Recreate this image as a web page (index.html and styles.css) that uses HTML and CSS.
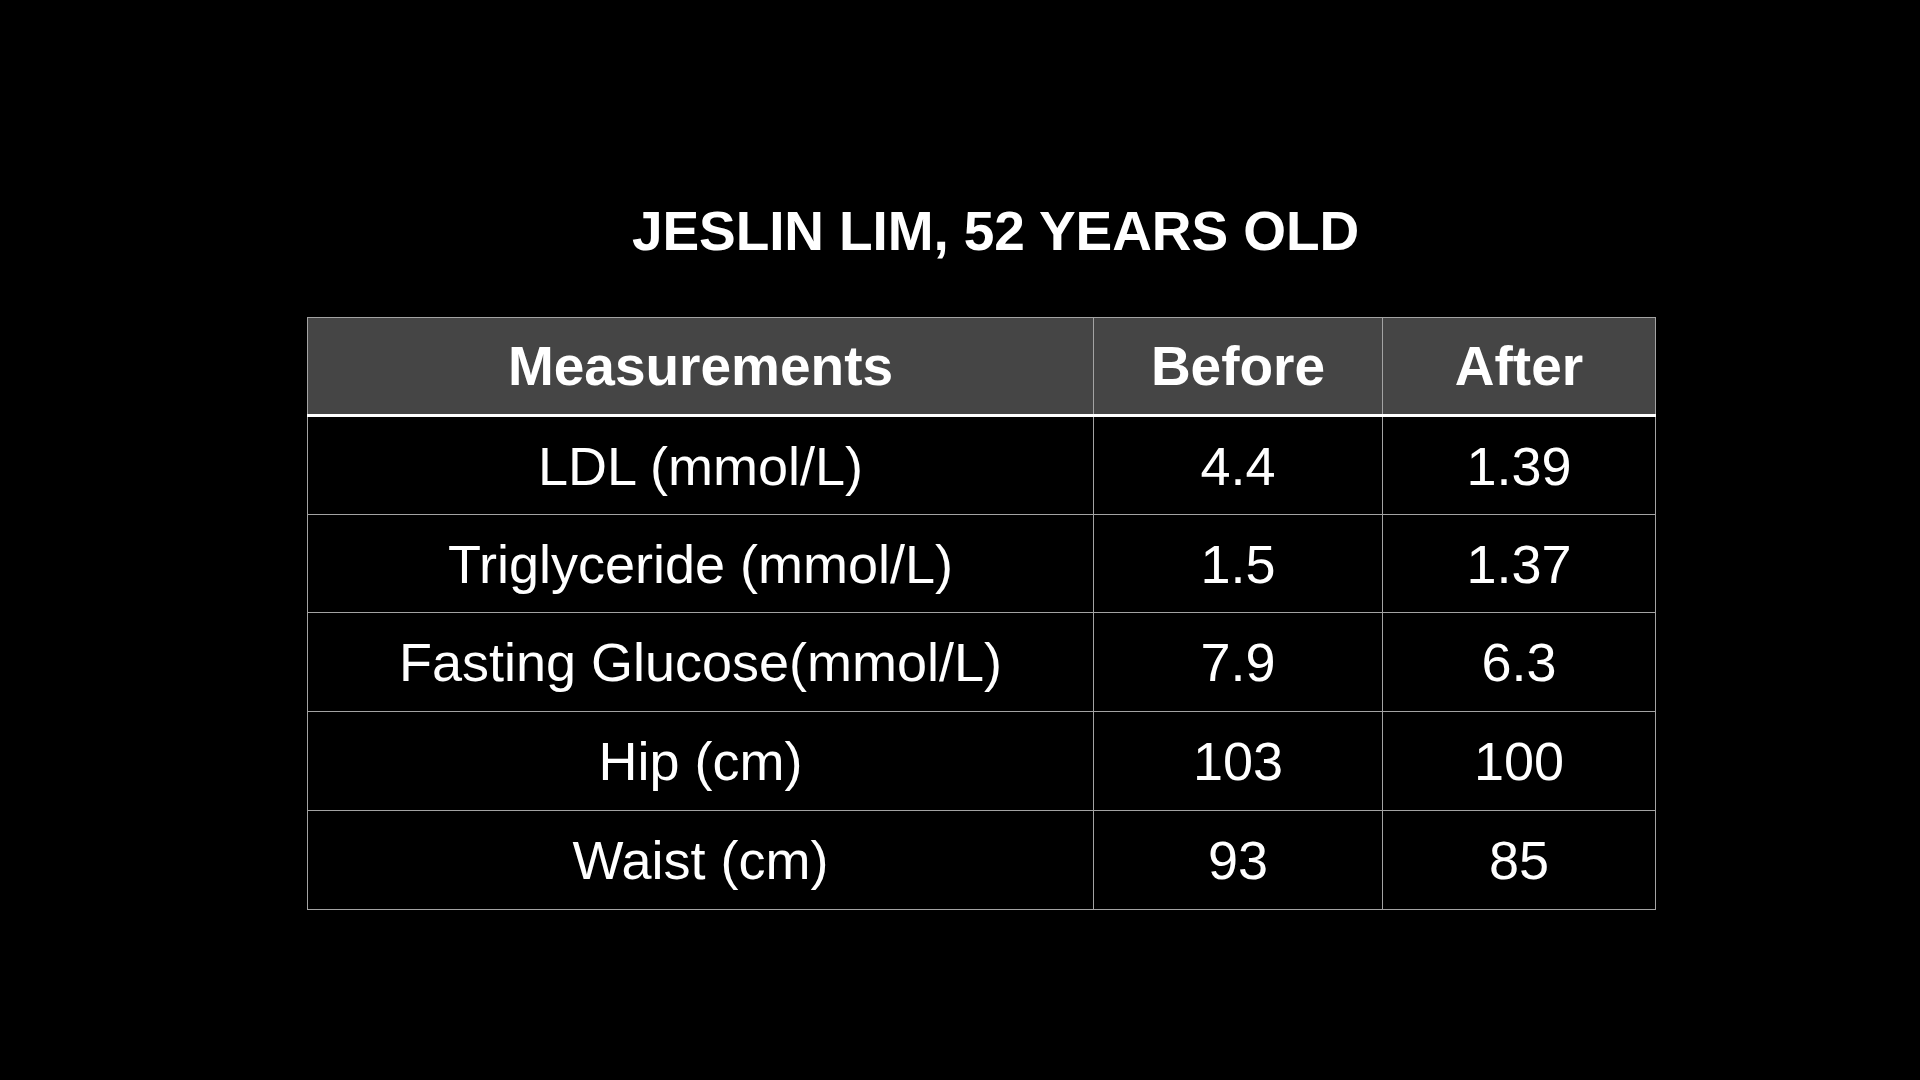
FILE: index.html
```html
<!DOCTYPE html>
<html lang="en">
<head>
<meta charset="utf-8">
<title>Jeslin Lim, 52 Years Old</title>
<link rel="stylesheet" href="styles.css">
</head>
<body>
<main class="slide">
  <h1 class="title">JESLIN LIM, 52 YEARS OLD</h1>
  <table class="data">
    <colgroup>
      <col class="c-name">
      <col class="c-before">
      <col class="c-after">
    </colgroup>
    <thead>
      <tr>
        <th>Measurements</th>
        <th>Before</th>
        <th>After</th>
      </tr>
    </thead>
    <tbody>
      <tr class="r1"><td>LDL (mmol/L)</td><td>4.4</td><td>1.39</td></tr>
      <tr class="r2"><td>Triglyceride (mmol/L)</td><td>1.5</td><td>1.37</td></tr>
      <tr class="r3"><td>Fasting Glucose(mmol/L)</td><td>7.9</td><td>6.3</td></tr>
      <tr class="r4"><td>Hip (cm)</td><td>103</td><td>100</td></tr>
      <tr class="r5"><td>Waist (cm)</td><td>93</td><td>85</td></tr>
    </tbody>
  </table>
</main>
</body>
</html>
```

FILE: styles.css
```css
html, body {
  margin: 0;
  padding: 0;
  background: #000;
}

body {
  width: 1920px;
  height: 1080px;
  overflow: hidden;
  font-family: "Liberation Sans", Arial, Helvetica, sans-serif;
  color: #fff;
}

.slide {
  display: flex;
  flex-direction: column;
  align-items: flex-start;
  padding: 204px 0 0 307px;
}

.title {
  width: 1348px;
  box-sizing: border-box;
  padding-left: 29px;
  margin: 0 0 58px 0;
  font-size: 55px;
  line-height: 55px;
  font-weight: 700;
  text-align: center;
  letter-spacing: -0.1px;
}

.data {
  border-collapse: collapse;
  width: 1348px;
  table-layout: fixed;
}

.c-name { width: 786px; }
.c-before { width: 289px; }
.c-after { width: 273px; }

.data th,
.data td {
  border: 1px solid #a3a3a3;
  padding: 0;
  text-align: center;
  vertical-align: middle;
  color: #fff;
}

.data th {
  background: #454545;
  height: 96px;
  font-size: 55px;
  font-weight: 700;
  line-height: 60px;
  border-bottom: 3px solid #fff;
}

.data td {
  height: 97px;
  font-size: 54px;
  font-weight: 400;
  line-height: 60px;
}

.data .r3 td,
.data .r5 td {
  height: 98px;
}

.data .r4 td {
  height: 98px;
}
```
